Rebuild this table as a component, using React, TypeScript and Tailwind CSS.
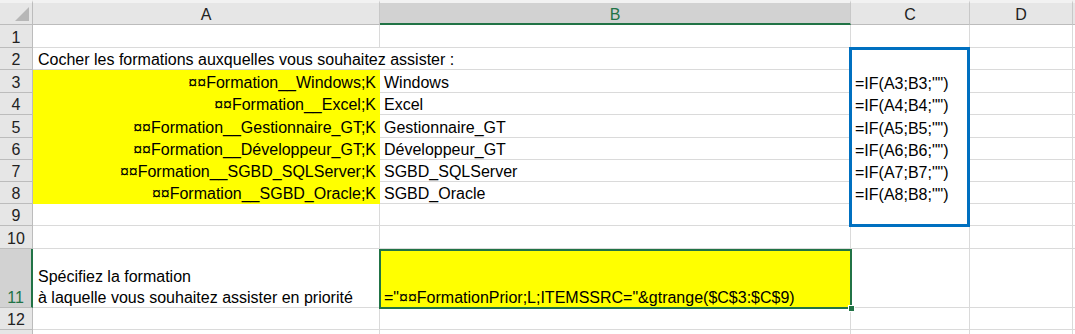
import React from 'react';

const yellowRows: Record<number, [string, string]> = {
  3: ['¤¤Formation__Windows;K', 'Windows'],
  4: ['¤¤Formation__Excel;K', 'Excel'],
  5: ['¤¤Formation__Gestionnaire_GT;K', 'Gestionnaire_GT'],
  6: ['¤¤Formation__Développeur_GT;K', 'Développeur_GT'],
  7: ['¤¤Formation__SGBD_SQLServer;K', 'SGBD_SQLServer'],
  8: ['¤¤Formation__SGBD_Oracle;K', 'SGBD_Oracle'],
};

const rowHeights = [23, 22, 23, 22, 23, 22, 22, 22, 22, 23, 59, 22];

const grid = 'border-r border-b border-[#dadada]';
const text = 'flex items-end leading-[18px] whitespace-nowrap';

export default function App() {
  return (
    <div className="w-[1075px] h-[334px] overflow-hidden bg-white font-['Liberation_Sans',Arial,sans-serif] text-[16px] text-black">
      <div className="relative">
        <div className="grid grid-cols-[33px_347px_471px_119px_103px_2px] grid-rows-[25px_23px_22px_23px_22px_23px_22px_22px_22px_22px_23px_59px_22px_20px]">
          {/* Header row */}
          <div className="relative bg-[#e6e6e6] border-t-[3px] border-t-[#f2f2f2] border-r border-b border-[#bcbcbc]">
            <div className="absolute right-[3px] bottom-[3px] w-0 h-0 border-l-[14px] border-l-transparent border-b-[14px] border-b-[#b7b7b7]" />
          </div>
          <div className="bg-[#e6e6e6] border-t-[3px] border-t-[#f2f2f2] border-r border-[#c8c8c8] border-b border-b-[#bcbcbc] flex items-center justify-center pt-[2px] text-[#222]">A</div>
          <div className="bg-[#d2d2d2] border-t-[3px] border-t-[#f2f2f2] border-r border-[#c8c8c8] border-b-2 border-b-[#217346] flex items-center justify-center pt-[3px] text-[#217346]">B</div>
          <div className="bg-[#e6e6e6] border-t-[3px] border-t-[#f2f2f2] border-r border-[#c8c8c8] border-b border-b-[#bcbcbc] flex items-center justify-center pt-[2px] text-[#222]">C</div>
          <div className="bg-[#e6e6e6] border-t-[3px] border-t-[#f2f2f2] border-r border-[#c8c8c8] border-b border-b-[#bcbcbc] flex items-center justify-center pt-[2px] text-[#222]">D</div>
          <div className="bg-[#e6e6e6] border-t-[3px] border-t-[#f2f2f2] border-b border-[#bcbcbc]" />

          {rowHeights.map((_, i) => {
            const n = i + 1;
            const yellow = yellowRows[n];
            const sel = n === 11;
            const inBox = n >= 2 && n <= 9;
            return (
              <React.Fragment key={n}>
                <div
                  className={
                    sel
                      ? `bg-[#d2d2d2] border-r-2 border-r-[#217346] border-b border-b-[#bcbcbc] justify-center ${text} text-[#217346]`
                      : `bg-[#e6e6e6] border-r border-b border-[#bcbcbc] justify-center ${text} text-[#222]`
                  }
                >
                  {n}
                </div>

                {/* Column A */}
                {yellow ? (
                  <div className={`bg-[#ffff00] border-r border-b border-[#ffff00] justify-end pr-[3px] ${text}`}>
                    {yellow[0]}
                  </div>
                ) : n === 2 ? (
                  <div className={`relative z-10 border-b border-[#dadada] pl-[5px] overflow-visible ${text}`}>
                    Cocher les formations auxquelles vous souhaitez assister :
                  </div>
                ) : sel ? (
                  <div className={`${grid} flex flex-col justify-end pl-[5px] whitespace-nowrap`}>
                    <span className="leading-[24px]">Spécifiez la formation</span>
                    <span className="leading-[18px]">à laquelle vous souhaitez assister en priorité</span>
                  </div>
                ) : (
                  <div className={grid} />
                )}

                {/* Column B */}
                {yellow ? (
                  <div className={`${grid} pl-[4px] ${text}`}>{yellow[1]}</div>
                ) : sel ? (
                  <div className={`bg-[#ffff00] border-r border-b border-[#dadada] pl-[4px] ${text}`}>
                    ="¤¤FormationPrior;L;ITEMSSRC="&amp;gtrange($C$3:$C$9)
                  </div>
                ) : (
                  <div className={grid} />
                )}

                {/* Column C */}
                {inBox ? (
                  <div className={`pl-[4px] ${text}`}>
                    {n >= 3 && n <= 8 ? `=IF(A${n};B${n};"")` : ''}
                  </div>
                ) : (
                  <div className={grid} />
                )}

                {/* Column D */}
                <div className={grid} />
                <div className="border-b border-[#dadada]" />
              </React.Fragment>
            );
          })}
          <div className="bg-[#e6e6e6] border-r border-[#bcbcbc]" />
          <div className="border-r border-[#dadada]" />
          <div className="border-r border-[#dadada]" />
          <div className="border-r border-[#dadada]" />
          <div className="border-r border-[#dadada]" />
          <div />
        </div>

        {/* Blue outline around C2:C9 */}
        <div className="absolute left-[849px] top-[47px] w-[121px] h-[180px] border-[3px] border-[#0070c0] pointer-events-none" />

        {/* Active cell B11 */}
        <div className="absolute left-[379px] top-[249px] w-[473px] h-[60px] border-2 border-[#217346] pointer-events-none" />
        <div className="absolute left-[848px] top-[305px] w-[7px] h-[7px] bg-[#217346] border border-white pointer-events-none" />
      </div>
    </div>
  );
}
